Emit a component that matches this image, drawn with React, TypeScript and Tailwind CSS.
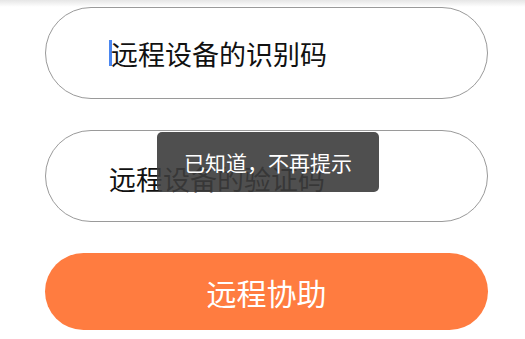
export default function App() {
  return (
    <div className="relative h-[339px] w-[525px] overflow-hidden bg-white font-['Noto_Sans_CJK_SC',sans-serif]">
      {/* header shadow */}
      <div className="h-[7px] bg-gradient-to-b from-[#e6e6e6] to-white" />

      <div className="ml-[45px] flex w-[443px] flex-col gap-[31px]">
        {/* device id */}
        <div className="flex h-[92px] items-center rounded-full border border-[#9a9a9a] pl-[63px]">
          <span className="mr-[-1px] h-[26px] w-[3px] bg-[#4a86f0]" />
          <span className="text-[27px] leading-none text-[#111]">远程设备的识别码</span>
        </div>

        {/* verify code + toast */}
        <div className="relative flex h-[92px] items-center rounded-full border border-[#9a9a9a] pl-[63px]">
          <span className="pt-[4px] text-[27px] leading-none text-[#111]">远程设备的验证码</span>
          <div className="absolute left-[111px] top-[1px] flex h-[60px] w-[222px] items-center justify-center rounded-[5px] bg-[#3c3c3c]/90">
            <span className="text-[21px] leading-none text-white">已知道，不再提示</span>
          </div>
        </div>

        {/* submit */}
        <button className="flex h-[77px] items-center justify-center rounded-full bg-[#ff7c40]">
          <span className="text-[30px] leading-none text-white">远程协助</span>
        </button>
      </div>
    </div>
  );
}
